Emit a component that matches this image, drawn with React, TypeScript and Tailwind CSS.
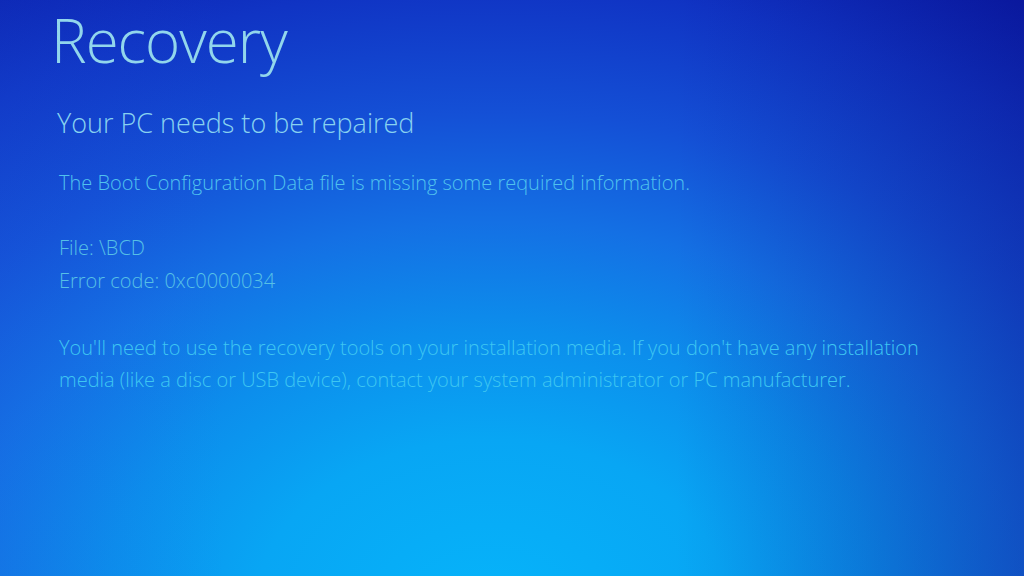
export default function App() {
  return (
    <div className="relative h-[576px] w-[1024px] overflow-hidden bg-[#0a22b8] font-['Open_Sans','Noto_Sans',sans-serif]">
      <div className="absolute inset-0 bg-[radial-gradient(ellipse_105%_135%_at_48%_106%,#06b4fa_0%,#08a6f4_22%,#0c8eec_36%,#1470e4_50%,#1450d6_64%,#1034c4_80%,#0b1eae_92%,#0a14a0_100%)]" />
      <div className="absolute inset-0 bg-[linear-gradient(to_right,rgba(30,100,225,0.15),rgba(0,0,0,0)_22%,rgba(0,0,0,0)_66%,rgba(8,14,125,0.32))]" />
      <div className="relative flex flex-col pl-[55px] pt-[2px]">
        <h1 className="-ml-[4px] text-[60px] font-light leading-[76px] tracking-[-1px] text-[#92d6ec]">Recovery</h1>
        <h2 className="ml-[2px] mt-[25px] text-[27px] font-light leading-[40px] text-[#88d2f0]">Your PC needs to be repaired</h2>
        <div className="ml-[4px] mt-[23px] flex flex-col text-[20px] font-light text-[#50c2ee]">
          <p className="leading-[33px]">The Boot Configuration Data file is missing some required information.</p>
          <p className="mt-[32px] leading-[33px] text-[#56c0e6]">File: \BCD</p>
          <p className="leading-[33px] text-[#56c0e6]">Error code: 0xc0000034</p>
          <p className="mt-[35px] w-[880px] leading-[32px] text-[#3ec6f2]">
            You'll need to use the recovery tools on your installation media. If you don't have any installation media (like a disc or USB device), contact your system administrator or PC manufacturer.
          </p>
        </div>
      </div>
    </div>
  );
}
